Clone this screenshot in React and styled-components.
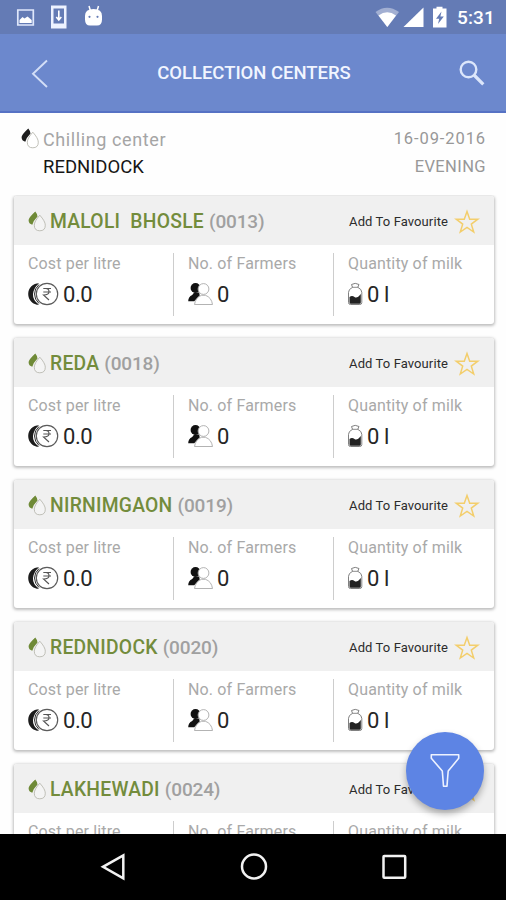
import styled, { createGlobalStyle } from "styled-components"

const GlobalStyle = createGlobalStyle`
    * {
        box-sizing: border-box;
    }
    body {
        margin: 0;
        background: #fefefe;
        font-family: Roboto, "Liberation Sans", sans-serif;
    }
    svg {
        display: block;
        flex-shrink: 0;
    }
`

const Screen = styled.div`
    position: relative;
    display: flex;
    flex-direction: column;
    width: 506px;
    height: 900px;
    overflow: hidden;
    background: #fefefe;
`

const StatusBar = styled.div`
    display: flex;
    justify-content: space-between;
    flex-shrink: 0;
    height: 34px;
    padding: 0 11px 0 15px;
    background: #647bb5;
    color: #fff;
`

const StatusGroup = styled.div`
    display: flex;
    align-items: center;
    gap: ${({ $gap }) => $gap}px;
`

const Clock = styled.span`
    width: 38px;
    margin-left: 1px;
    padding-top: 2px;
    font-size: 19px;
    font-weight: 500;
    line-height: 22px;
    letter-spacing: 0.1px;
    white-space: nowrap;
`

const AppBar = styled.header`
    display: flex;
    align-items: center;
    justify-content: space-between;
    flex-shrink: 0;
    height: 79px;
    padding: 0 20px 0 30px;
    border-bottom: 2px solid #5672c4;
    background: #6c88cd;
`

const Title = styled.h1`
    margin: 0;
    color: #f1f5ff;
    font-size: 18.5px;
    font-weight: 500;
    line-height: 24px;
    letter-spacing: -0.03px;
    white-space: nowrap;
`

const Summary = styled.section`
    display: flex;
    justify-content: space-between;
    flex-shrink: 0;
    height: 82px;
    padding: 12px 20px 0 21px;
`

const Center = styled.div`
    display: grid;
    grid-template-columns: 22px auto;
    grid-template-rows: 28px 28px;
    align-items: center;
`

const CenterLabel = styled.span`
    color: #a5a5a5;
    font-size: 18px;
    letter-spacing: 0.6px;
`

const CenterName = styled.span`
    grid-column: 2;
    color: #161616;
    font-size: 18.5px;
`

const Shift = styled.div`
    display: grid;
    grid-template-rows: 27px 28px;
    align-items: center;
    justify-items: end;
    color: #989898;
    font-size: 16.5px;
    letter-spacing: 0.4px;
`

const ShiftDate = styled.span`
    letter-spacing: 0.9px;
`

const List = styled.main`
    display: flex;
    flex: 1;
    flex-direction: column;
    gap: 14px;
    min-height: 0;
    padding: 1px 12.5px 0 14px;
    overflow: hidden;
`

const Card = styled.article`
    flex-shrink: 0;
    height: 128px;
    border-radius: 3px;
    background: #fff;
    box-shadow: 0 1px 3px 1px rgba(0, 0, 0, 0.25);
    overflow: hidden;
`

const CardHeader = styled.div`
    display: flex;
    align-items: center;
    height: 49px;
    padding: 2px 13.5px 0 14px;
    background: #f0f0f0;
`

const Name = styled.span`
    margin-left: 3px;
    color: #738c3c;
    font-size: 19.3px;
    font-weight: 500;
    letter-spacing: 0.25px;
    white-space: pre;
`

const Code = styled.span`
    flex: 1;
    margin-left: 5px;
    color: #a0a0a0;
    font-size: 19px;
    font-weight: 500;
    letter-spacing: -0.15px;
`

const Favourite = styled.span`
    margin-right: 6px;
    color: #2c2c2c;
    font-size: 13px;
    letter-spacing: 0.1px;
`

const Stats = styled.div`
    display: grid;
    grid-template-columns: 160px 160px 1fr;
    padding-top: 8px;
`

const Stat = styled.div`
    height: 63px;
    padding-left: 14px;
    border-right: ${({ $last }) => ($last ? "none" : "1.5px solid #cdcdcd")};
`

const StatLabel = styled.div`
    padding-top: 1px;
    color: #a9a9a9;
    font-size: 16px;
    line-height: 20px;
    letter-spacing: 0.15px;
    white-space: nowrap;
`

const StatValue = styled.div`
    display: flex;
    align-items: center;
    gap: 4px;
    height: 40px;
    color: #262626;
    font-size: 22px;
    letter-spacing: -0.4px;
`

const Fab = styled.button`
    position: absolute;
    top: 732px;
    left: 406px;
    display: flex;
    align-items: center;
    justify-content: center;
    width: 78px;
    height: 78px;
    padding: 0;
    border: none;
    border-radius: 50%;
    background: #5d84e4;
    box-shadow: 0 4px 7px rgba(0, 0, 0, 0.3);
`

const NavBar = styled.nav`
    display: flex;
    justify-content: space-between;
    align-items: center;
    flex-shrink: 0;
    height: 66px;
    padding: 0 98px 0 99px;
    background: #000;
`

const ImageIcon = () => (
    <svg width="20" height="34" viewBox="0 0 20 34">
        <path d="M2.800 10h15.500v15H2.800z" fill="none" stroke="#dfe7fb" strokeWidth="1.700" />
        <path d="M4.500 23v-3l3-3 2 1.500 3-2 4.200 3.500v3z" fill="#fff" />
    </svg>
)

const DownloadIcon = () => (
    <svg width="18" height="34" viewBox="0 0 18 34">
        <path
            d="M1 5.500h15.500v23H1zM3.500 8.500v15h10.500v-15z"
            fill="#edf2ff"
            fillRule="evenodd"
        />
        <path d="M8.800 10.500v9M6.300 17l2.500 3 2.500-3" fill="none" stroke="#fff" strokeWidth="1.600" />
    </svg>
)

const DroidIcon = () => (
    <svg width="20" height="34" viewBox="0 0 20 34">
        <path d="M6 6l1.500 5M15.500 6l-1.500 5" stroke="#fff" strokeWidth="1.500" />
        <path d="M2 16q0-7 8.500-7t8.500 7v3.500q0 6-5 6H7q-5 0-5-6z" fill="#fff" />
        <circle cx="6.500" cy="16.800" r="1.100" fill="#647bb5" />
        <circle cx="14.500" cy="16.800" r="1.100" fill="#647bb5" />
    </svg>
)

const WifiIcon = () => (
    <svg width="25" height="34" viewBox="0 0 25 34">
        <path d="M.5 12Q12 3.500 24 12L12.300 27z" fill="#fff" fillOpacity=".4" />
        <path d="M3.500 15.500q8.800-6.500 17.500 0L12.300 27z" fill="#fff" />
    </svg>
)

const SignalIcon = () => (
    <svg width="21" height="34" viewBox="0 0 21 34">
        <path d="M.5 27L20.500 7.500V27z" fill="#fff" />
    </svg>
)

const BatteryIcon = () => (
    <svg width="16" height="34" viewBox="0 0 16 34">
        <path d="M1 8.500h3.500V6.700h6v1.800H14.500v19H1z" fill="#fff" />
        <path d="M9.500 11.500L4 18.700h3.200l-1.200 5.300 5.800-7.500H8.400z" fill="#647bb5" />
    </svg>
)

const BackIcon = () => (
    <svg width="20" height="32" viewBox="0 0 20 32">
        <path d="M17 3.500L3 16.800 17 30" fill="none" stroke="#d3def7" strokeWidth="1.900" />
    </svg>
)

const SearchIcon = () => (
    <svg width="28" height="32" viewBox="0 0 28 32">
        <circle cx="10.500" cy="12.500" r="7.800" fill="none" stroke="#dce6fb" strokeWidth="2.400" />
        <path d="M16 18l9.300 9.300" stroke="#dce6fb" strokeWidth="3.200" />
    </svg>
)

// dark drop behind, outlined drop in front
const DropsIcon = ({ color, fill }) => (
    <svg width="19" height="22" viewBox="0 0 19 22">
        <path
            d="M7.300.6Q1 6.300.6 9.300q0 3.500 3.700 4.500Q5.500 9.500 9.500 5.500 9 2.500 7.300.6z"
            fill={color}
        />
        <path
            d="M11.800 4.200Q6.300 10.300 6.300 14.200q0 5.600 5.500 5.600t5.500-5.600q0-3.900-5.500-10z"
            fill={fill}
            stroke="#b9b9b0"
            strokeWidth=".9"
        />
    </svg>
)

const StarIcon = () => (
    <svg width="26" height="26" viewBox="0 0 26 26">
        <path
            d="M13 2.500l2.700 7.700h8.100l-6.500 4.900 2.400 7.900-6.700-4.700L6.300 23l2.400-7.900-6.500-4.900h8.100z"
            fill="none"
            stroke="#f3ce6c"
            strokeWidth="1.500"
        />
    </svg>
)

const CoinsIcon = () => (
    <svg width="31" height="24" viewBox="0 0 31 24">
        <path d="M11 1.200a10.800 10.800 0 0 0 0 21.600Q4.500 18 5 12T11 1.200z" fill="#1c1c1c" />
        <path d="M11 2.500Q6.500 6.500 6.500 12T11 21.500" fill="none" stroke="#333" strokeWidth="1" />
        <circle cx="19" cy="12" r="10.700" fill="#fff" stroke="#5c5c5c" strokeWidth="1.200" />
        <path
            d="M15.300 6.500h7.700M15.300 10h7.700M15.300 6.500h2.500q3.200 0 3.200 3.200t-5.500 3.300l5.500 5"
            fill="none"
            stroke="#555"
            strokeWidth="1.100"
        />
    </svg>
)

const FarmersIcon = () => (
    <svg width="25" height="24" viewBox="0 0 25 24">
        <circle cx="7.500" cy="6" r="4.900" fill="#111" />
        <path d="M.2 19.300q0-4.500 4-6.300l2-2.500h5l.5 3-5.500 5.800z" fill="#111" />
        <circle cx="15.500" cy="7" r="5.400" fill="#fff" stroke="#aaa" strokeWidth=".9" />
        <path
            d="M6.500 22.500q1-7 7-9.200h4q6 2.200 7 9.200z"
            fill="#fff"
            stroke="#aaa"
            strokeWidth=".9"
        />
    </svg>
)

const BottleIcon = () => (
    <svg width="15" height="24" viewBox="0 0 15 24">
        <path
            d="M3.500 2.500Q7.200.2 11 2.500L9.800 5.300q4 2 4 5v10.200q0 2-2 2H2.500q-2 0-2-2V10.300q0-3 4-5z"
            fill="#fff"
            stroke="#808080"
            strokeWidth="1"
        />
        <path d="M4 5.300h6.200" stroke="#8b8b8b" strokeWidth="1" />
        <path d="M1.500 15q2.500-2 5 0t6.300-3v8.500q0 1.200-1.200 1.200h-9Q1.500 21.700 1.500 20.500z" fill="#222" />
    </svg>
)

const FunnelIcon = () => (
    <svg width="32" height="38" viewBox="0 0 32 38">
        <path
            d="M2.300 2.800h27.400v3.500L19.200 19q-.7 8-1.200 15.300h-3.500Q14 27 13.300 19L2.300 6.300z"
            fill="none"
            stroke="#edf2ff"
            strokeWidth="1.600"
            strokeLinejoin="round"
        />
    </svg>
)

const NavBackIcon = () => (
    <svg width="28" height="30" viewBox="0 0 28 30">
        <path d="M24.300 3.300v23L4 14.800z" fill="none" stroke="#f2f2f2" strokeWidth="2.500" />
    </svg>
)

const NavHomeIcon = () => (
    <svg width="30" height="30" viewBox="0 0 30 30">
        <circle cx="15" cy="14.500" r="12" fill="none" stroke="#f2f2f2" strokeWidth="2.500" />
    </svg>
)

const NavRecentIcon = () => (
    <svg width="28" height="30" viewBox="0 0 28 30">
        <rect x="3.500" y="4" width="21.700" height="21.700" rx=".8" fill="none" stroke="#f2f2f2" strokeWidth="2.500" />
    </svg>
)

const centers = [
    { name: "MALOLI  BHOSLE", code: "0013" },
    { name: "REDA", code: "0018" },
    { name: "NIRNIMGAON", code: "0019" },
    { name: "REDNIDOCK", code: "0020" },
    { name: "LAKHEWADI", code: "0024" },
]

const CenterCard = ({ name, code }) => (
    <Card>
        <CardHeader>
            <DropsIcon color="#6f8a37" fill="#f4f4f4" />
            <Name>{name}</Name>
            <Code>({code})</Code>
            <Favourite>Add To Favourite</Favourite>
            <StarIcon />
        </CardHeader>
        <Stats>
            <Stat>
                <StatLabel>Cost per litre</StatLabel>
                <StatValue><CoinsIcon />0.0</StatValue>
            </Stat>
            <Stat>
                <StatLabel>No. of Farmers</StatLabel>
                <StatValue><FarmersIcon />0</StatValue>
            </Stat>
            <Stat $last>
                <StatLabel>Quantity of milk</StatLabel>
                <StatValue><BottleIcon />0 l</StatValue>
            </Stat>
        </Stats>
    </Card>
)

export default function App() {
    return (
        <>
            <GlobalStyle />
            <Screen>
                <StatusBar>
                    <StatusGroup $gap={15}>
                        <ImageIcon />
                        <DownloadIcon />
                        <DroidIcon />
                    </StatusGroup>
                    <StatusGroup $gap={8}>
                        <StatusGroup $gap={3}>
                            <WifiIcon />
                            <SignalIcon />
                        </StatusGroup>
                        <BatteryIcon />
                        <Clock>5:31</Clock>
                    </StatusGroup>
                </StatusBar>
                <AppBar>
                    <BackIcon />
                    <Title>COLLECTION CENTERS</Title>
                    <SearchIcon />
                </AppBar>
                <Summary>
                    <Center>
                        <DropsIcon color="#1d1d1d" fill="#fff" />
                        <CenterLabel>Chilling center</CenterLabel>
                        <CenterName>REDNIDOCK</CenterName>
                    </Center>
                    <Shift>
                        <ShiftDate>16-09-2016</ShiftDate>
                        <span>EVENING</span>
                    </Shift>
                </Summary>
                <List>
                    {centers.map((c) => <CenterCard key={c.code} {...c} />)}
                </List>
                <NavBar>
                    <NavBackIcon />
                    <NavHomeIcon />
                    <NavRecentIcon />
                </NavBar>
                <Fab aria-label="Filter">
                    <FunnelIcon />
                </Fab>
            </Screen>
        </>
    )
}
